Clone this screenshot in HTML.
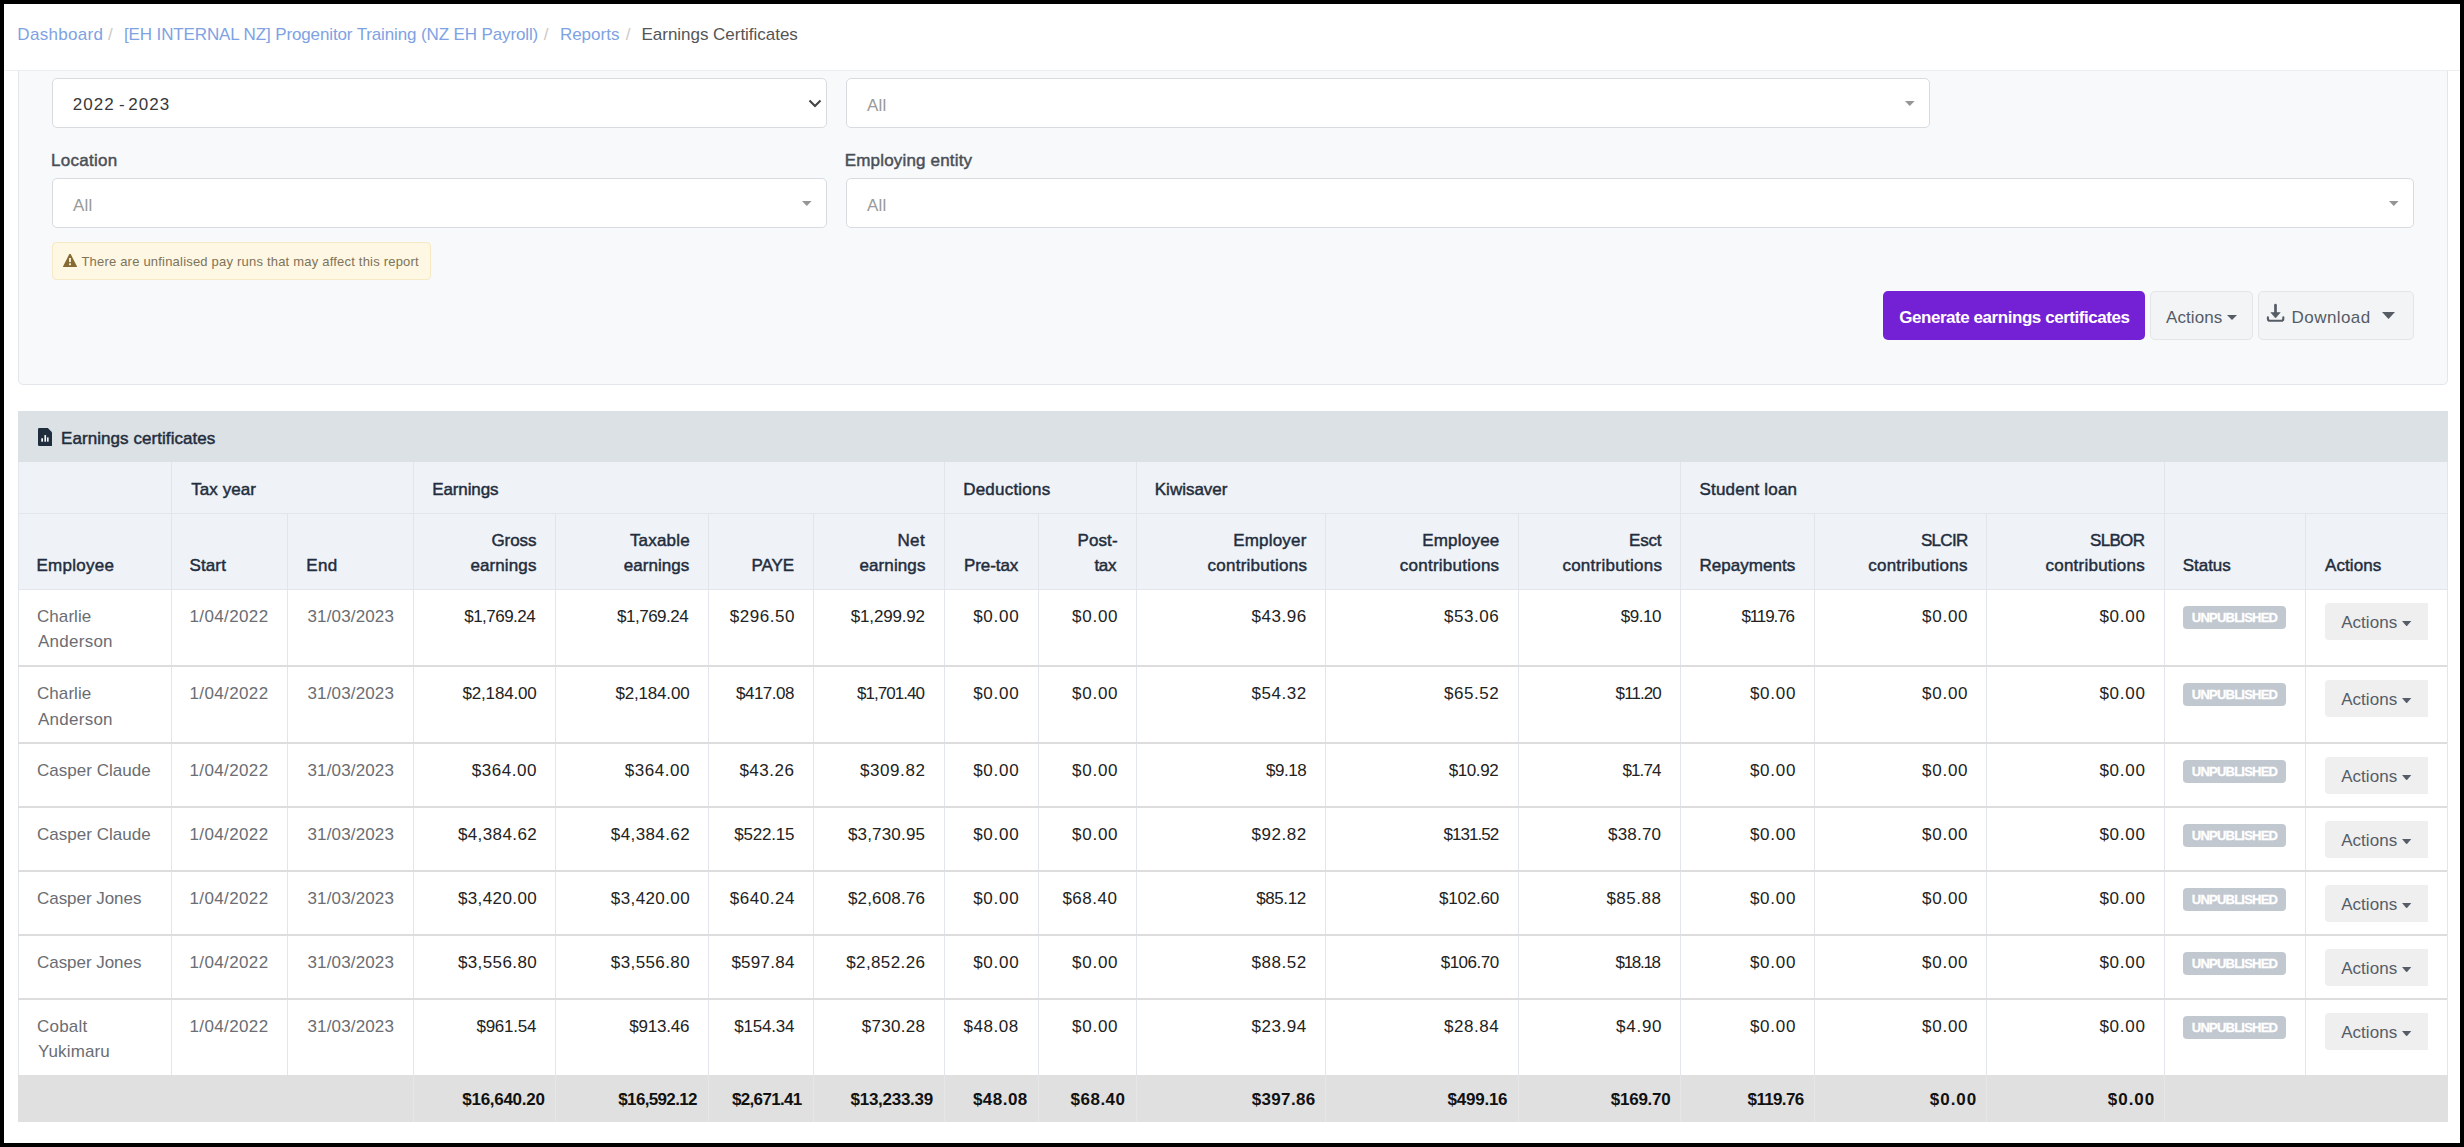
<!DOCTYPE html>
<html><head><meta charset="utf-8"><title>Earnings Certificates</title>
<style>
html,body{margin:0;padding:0;}
body{width:2464px;height:1147px;background:#000;position:relative;overflow:hidden;font-family:"Liberation Sans", sans-serif;}
.t{position:absolute;white-space:nowrap;line-height:40px;font-family:"Liberation Sans", sans-serif;}
.r{position:absolute;}
</style></head><body>
<div class="r" style="left:4px;top:4px;width:2456px;height:1139px;background:#ffffff;"></div>
<div class="t" style="left:17.30px;top:15.00px;font-size:17px;color:#7ea2e3;z-index:2;letter-spacing:0.325px;">Dashboard</div>
<div class="t" style="left:108.10px;top:15.00px;font-size:17px;color:#cdc9c5;z-index:2;">/</div>
<div class="t" style="left:124.00px;top:15.00px;font-size:17px;color:#7ea2e3;z-index:2;letter-spacing:-0.127px;">[EH INTERNAL NZ] Progenitor Training (NZ EH Payroll)</div>
<div class="t" style="left:543.80px;top:15.00px;font-size:17px;color:#cdc9c5;z-index:2;">/</div>
<div class="t" style="left:559.90px;top:15.00px;font-size:17px;color:#7ea2e3;z-index:2;">Reports</div>
<div class="t" style="left:625.80px;top:15.00px;font-size:17px;color:#cdc9c5;z-index:2;">/</div>
<div class="t" style="left:641.50px;top:15.00px;font-size:17px;color:#555555;z-index:2;letter-spacing:-0.025px;">Earnings Certificates</div>
<div class="r" style="left:18px;top:60px;width:2430px;height:325px;background:#f8f9fb;border:1px solid #e3e6ea;box-sizing:border-box;border-radius:5px;"></div>
<div class="r" style="left:4px;top:4px;width:2456px;height:66px;background:#ffffff;z-index:1;"></div>
<div class="r" style="left:5px;top:70px;width:2455px;height:1px;background:#eceef1;z-index:1;"></div>
<div class="r" style="left:52px;top:78px;width:775px;height:50px;background:#ffffff;border:1px solid #d8dce0;box-sizing:border-box;border-radius:5px;"></div>
<div class="r" style="left:846px;top:78px;width:1084px;height:50px;background:#ffffff;border:1px solid #d8dce0;box-sizing:border-box;border-radius:5px;"></div>
<div class="r" style="left:52px;top:178px;width:775px;height:50px;background:#ffffff;border:1px solid #d8dce0;box-sizing:border-box;border-radius:5px;"></div>
<div class="r" style="left:846px;top:178px;width:1568px;height:50px;background:#ffffff;border:1px solid #d8dce0;box-sizing:border-box;border-radius:5px;"></div>
<div class="t" style="left:72.80px;top:85.00px;font-size:17px;color:#383838;z-index:2;letter-spacing:1.067px;">2022</div>
<div class="t" style="left:119.10px;top:85.00px;font-size:17px;color:#383838;z-index:2;">-</div>
<div class="t" style="left:128.30px;top:85.00px;font-size:17px;color:#383838;z-index:2;letter-spacing:1.000px;">2023</div>
<div class="t" style="left:867.00px;top:86.00px;font-size:17px;color:#9a9a9a;z-index:2;letter-spacing:0.150px;">All</div>
<div class="t" style="left:73.00px;top:186.00px;font-size:17px;color:#9a9a9a;z-index:2;letter-spacing:0.150px;">All</div>
<div class="t" style="left:867.00px;top:186.00px;font-size:17px;color:#9a9a9a;z-index:2;letter-spacing:0.150px;">All</div>
<svg class="r" style="left:807px;top:98px" width="16" height="12" viewBox="0 0 16 12"><path d="M2.5 2.5 L8 8 L13.5 2.5" fill="none" stroke="#444" stroke-width="2.1"/></svg>
<svg class="r" style="left:1905.2px;top:100.8px;z-index:2" width="9.6" height="5" viewBox="0 0 9.6 5"><path d="M0 0 L9.6 0 L4.8 5 Z" fill="#959595"/></svg>
<svg class="r" style="left:802.3000000000001px;top:200.9px;z-index:2" width="9.6" height="5" viewBox="0 0 9.6 5"><path d="M0 0 L9.6 0 L4.8 5 Z" fill="#959595"/></svg>
<svg class="r" style="left:2389.2px;top:200.9px;z-index:2" width="9.6" height="5" viewBox="0 0 9.6 5"><path d="M0 0 L9.6 0 L4.8 5 Z" fill="#959595"/></svg>
<div class="t" style="left:51.00px;top:141.00px;font-size:17px;color:#4a4f57;z-index:2;-webkit-text-stroke:0.45px #4a4f57;letter-spacing:0.286px;">Location</div>
<div class="t" style="left:844.70px;top:141.00px;font-size:17px;color:#4a4f57;z-index:2;-webkit-text-stroke:0.45px #4a4f57;letter-spacing:0.180px;">Employing entity</div>
<div class="r" style="left:52px;top:242px;width:379px;height:38px;background:#fdf7e3;border:1px solid #f6e9c4;box-sizing:border-box;border-radius:4px;"></div>
<svg class="r" style="left:62px;top:253px;z-index:2" width="16" height="15" viewBox="0 0 16 15"><path d="M7.2 1.2 Q8 0.3 8.8 1.2 L15 13.4 Q15.2 14 14.5 14 L1.5 14 Q0.8 14 1 13.4 Z" fill="#866a33"/><rect x="7.1" y="5" width="1.8" height="4.1" fill="#fdf7e3"/><rect x="7.1" y="10.3" width="1.8" height="1.9" fill="#fdf7e3"/></svg>
<div class="t" style="left:81.40px;top:242.00px;font-size:13px;color:#7f7358;z-index:2;letter-spacing:0.204px;">There are unfinalised pay runs that may affect this report</div>
<div class="r" style="left:1883px;top:291px;width:262px;height:49px;background:#7421d6;border-radius:5px;"></div>
<div class="t" style="left:1899.20px;top:298.00px;font-size:17px;color:#ffffff;z-index:2;font-weight:700;letter-spacing:-0.448px;">Generate earnings certificates</div>
<div class="r" style="left:2150px;top:291px;width:103px;height:49px;background:#f3f4f6;border:1px solid #e3e5e8;box-sizing:border-box;border-radius:5px;"></div>
<div class="t" style="left:2166.00px;top:298.00px;font-size:17px;color:#555c66;z-index:2;letter-spacing:0.100px;">Actions</div>
<svg class="r" style="left:2227.0px;top:315px;z-index:2" width="10" height="5" viewBox="0 0 10 5"><path d="M0 0 L10 0 L5.0 5 Z" fill="#555c66"/></svg>
<div class="r" style="left:2258px;top:291px;width:156px;height:49px;background:#f3f4f6;border:1px solid #e3e5e8;box-sizing:border-box;border-radius:5px;"></div>
<svg class="r" style="left:2264px;top:302px;z-index:2" width="24" height="24" viewBox="0 0 24 24"><path d="M11.5 3.2 V11.5" stroke="#555c66" stroke-width="2.7" stroke-linecap="round" fill="none"/><path d="M6.9 10.6 L16.2 10.6 L11.55 16 Z" fill="#555c66" stroke="#555c66" stroke-width="0.6" stroke-linejoin="round"/><path d="M3.9 15.2 V16.7 Q3.9 18.8 6 18.8 H17.2 Q19.3 18.8 19.3 16.7 V15.2" stroke="#555c66" stroke-width="2.1" stroke-linecap="round" fill="none"/></svg>
<div class="t" style="left:2291.60px;top:298.00px;font-size:17px;color:#555c66;z-index:2;letter-spacing:0.429px;">Download</div>
<svg class="r" style="left:2381.5px;top:312px;z-index:2" width="13" height="7" viewBox="0 0 13 7"><path d="M0 0 L13 0 L6.5 7 Z" fill="#555c66"/></svg>
<div class="r" style="left:18px;top:411px;width:2430px;height:51px;background:#dbe1e4;"></div>
<svg class="r" style="left:37.8px;top:428px" width="14.4" height="18" viewBox="0 0 14.4 18"><path d="M1.2 0 H9.8 L14.4 4.6 V16.8 Q14.4 18 13.2 18 H1.2 Q0 18 0 16.8 V1.2 Q0 0 1.2 0 Z" fill="#1f2d3d"/><rect x="3.3" y="10.3" width="1.7" height="3.4" fill="#ffffff"/><rect x="6.4" y="7.1" width="1.7" height="6.6" fill="#ffffff"/><rect x="9.1" y="9.4" width="1.5" height="4.3" fill="#ffffff"/></svg>
<div class="t" style="left:61.00px;top:419.00px;font-size:17px;color:#1f2d3d;z-index:2;-webkit-text-stroke:0.45px #1f2d3d;letter-spacing:0.065px;">Earnings certificates</div>
<div class="r" style="left:18px;top:462px;width:2429px;height:127px;background:#eff2f7;"></div>
<div class="r" style="left:18px;top:513px;width:2429px;height:1px;background:#e2e6ec;"></div>
<div class="r" style="left:18px;top:589px;width:2429px;height:1px;background:#e2e6ec;"></div>
<div class="r" style="left:18px;top:590px;width:2429px;height:485px;background:#ffffff;"></div>
<div class="r" style="left:171px;top:462px;width:1px;height:51px;background:#e2e6ec;"></div>
<div class="r" style="left:413px;top:462px;width:1px;height:51px;background:#e2e6ec;"></div>
<div class="r" style="left:944px;top:462px;width:1px;height:51px;background:#e2e6ec;"></div>
<div class="r" style="left:1136px;top:462px;width:1px;height:51px;background:#e2e6ec;"></div>
<div class="r" style="left:1680px;top:462px;width:1px;height:51px;background:#e2e6ec;"></div>
<div class="r" style="left:2164px;top:462px;width:1px;height:51px;background:#e2e6ec;"></div>
<div class="r" style="left:171px;top:513px;width:1px;height:562px;background:#e2e6ec;"></div>
<div class="r" style="left:287px;top:513px;width:1px;height:562px;background:#e2e6ec;"></div>
<div class="r" style="left:413px;top:513px;width:1px;height:562px;background:#e2e6ec;"></div>
<div class="r" style="left:555px;top:513px;width:1px;height:562px;background:#e2e6ec;"></div>
<div class="r" style="left:708px;top:513px;width:1px;height:562px;background:#e2e6ec;"></div>
<div class="r" style="left:813px;top:513px;width:1px;height:562px;background:#e2e6ec;"></div>
<div class="r" style="left:944px;top:513px;width:1px;height:562px;background:#e2e6ec;"></div>
<div class="r" style="left:1038px;top:513px;width:1px;height:562px;background:#e2e6ec;"></div>
<div class="r" style="left:1136px;top:513px;width:1px;height:562px;background:#e2e6ec;"></div>
<div class="r" style="left:1325px;top:513px;width:1px;height:562px;background:#e2e6ec;"></div>
<div class="r" style="left:1518px;top:513px;width:1px;height:562px;background:#e2e6ec;"></div>
<div class="r" style="left:1680px;top:513px;width:1px;height:562px;background:#e2e6ec;"></div>
<div class="r" style="left:1814px;top:513px;width:1px;height:562px;background:#e2e6ec;"></div>
<div class="r" style="left:1986px;top:513px;width:1px;height:562px;background:#e2e6ec;"></div>
<div class="r" style="left:2164px;top:513px;width:1px;height:562px;background:#e2e6ec;"></div>
<div class="r" style="left:2305px;top:513px;width:1px;height:562px;background:#e2e6ec;"></div>
<div class="r" style="left:18px;top:462px;width:1px;height:613px;background:#e2e6ec;"></div>
<div class="r" style="left:2447px;top:462px;width:1px;height:613px;background:#e2e6ec;"></div>
<div class="t" style="left:191.20px;top:470.00px;font-size:17px;color:#1f2d3d;z-index:2;-webkit-text-stroke:0.45px #1f2d3d;letter-spacing:0.071px;">Tax year</div>
<div class="t" style="left:432.20px;top:470.00px;font-size:17px;color:#1f2d3d;z-index:2;-webkit-text-stroke:0.45px #1f2d3d;letter-spacing:-0.100px;">Earnings</div>
<div class="t" style="left:963.20px;top:470.00px;font-size:17px;color:#1f2d3d;z-index:2;-webkit-text-stroke:0.45px #1f2d3d;letter-spacing:0.211px;">Deductions</div>
<div class="t" style="left:1154.80px;top:470.00px;font-size:17px;color:#1f2d3d;z-index:2;-webkit-text-stroke:0.45px #1f2d3d;letter-spacing:-0.012px;">Kiwisaver</div>
<div class="t" style="left:1699.50px;top:470.00px;font-size:17px;color:#1f2d3d;z-index:2;-webkit-text-stroke:0.45px #1f2d3d;letter-spacing:0.191px;">Student loan</div>
<div class="t" style="left:36.50px;top:546.00px;font-size:17px;color:#1f2d3d;z-index:2;-webkit-text-stroke:0.45px #1f2d3d;letter-spacing:0.257px;">Employee</div>
<div class="t" style="left:189.40px;top:546.00px;font-size:17px;color:#1f2d3d;z-index:2;-webkit-text-stroke:0.45px #1f2d3d;letter-spacing:0.150px;">Start</div>
<div class="t" style="left:306.30px;top:546.00px;font-size:17px;color:#1f2d3d;z-index:2;-webkit-text-stroke:0.45px #1f2d3d;letter-spacing:0.350px;">End</div>
<div class="t" style="left:491.40px;top:521.00px;font-size:17px;color:#1f2d3d;z-index:2;-webkit-text-stroke:0.45px #1f2d3d;letter-spacing:-0.050px;">Gross</div>
<div class="t" style="left:470.40px;top:546.00px;font-size:17px;color:#1f2d3d;z-index:2;-webkit-text-stroke:0.45px #1f2d3d;letter-spacing:0.114px;">earnings</div>
<div class="t" style="left:629.90px;top:521.00px;font-size:17px;color:#1f2d3d;z-index:2;-webkit-text-stroke:0.45px #1f2d3d;letter-spacing:0.183px;">Taxable</div>
<div class="t" style="left:623.80px;top:546.00px;font-size:17px;color:#1f2d3d;z-index:2;-webkit-text-stroke:0.45px #1f2d3d;letter-spacing:0.029px;">earnings</div>
<div class="t" style="left:751.40px;top:546.00px;font-size:17px;color:#1f2d3d;z-index:2;-webkit-text-stroke:0.45px #1f2d3d;letter-spacing:-0.067px;">PAYE</div>
<div class="t" style="left:897.40px;top:521.00px;font-size:17px;color:#1f2d3d;z-index:2;-webkit-text-stroke:0.45px #1f2d3d;letter-spacing:0.400px;">Net</div>
<div class="t" style="left:859.50px;top:546.00px;font-size:17px;color:#1f2d3d;z-index:2;-webkit-text-stroke:0.45px #1f2d3d;letter-spacing:0.100px;">earnings</div>
<div class="t" style="left:963.90px;top:546.00px;font-size:17px;color:#1f2d3d;z-index:2;-webkit-text-stroke:0.45px #1f2d3d;letter-spacing:-0.067px;">Pre-tax</div>
<div class="t" style="left:1077.60px;top:521.00px;font-size:17px;color:#1f2d3d;z-index:2;-webkit-text-stroke:0.45px #1f2d3d;letter-spacing:0.075px;">Post-</div>
<div class="t" style="left:1094.40px;top:546.00px;font-size:17px;color:#1f2d3d;z-index:2;-webkit-text-stroke:0.45px #1f2d3d;letter-spacing:-0.250px;">tax</div>
<div class="t" style="left:1233.20px;top:521.00px;font-size:17px;color:#1f2d3d;z-index:2;-webkit-text-stroke:0.45px #1f2d3d;letter-spacing:0.186px;">Employer</div>
<div class="t" style="left:1207.60px;top:546.00px;font-size:17px;color:#1f2d3d;z-index:2;-webkit-text-stroke:0.45px #1f2d3d;letter-spacing:0.242px;">contributions</div>
<div class="t" style="left:1422.20px;top:521.00px;font-size:17px;color:#1f2d3d;z-index:2;-webkit-text-stroke:0.45px #1f2d3d;letter-spacing:0.214px;">Employee</div>
<div class="t" style="left:1399.80px;top:546.00px;font-size:17px;color:#1f2d3d;z-index:2;-webkit-text-stroke:0.45px #1f2d3d;letter-spacing:0.242px;">contributions</div>
<div class="t" style="left:1629.10px;top:521.00px;font-size:17px;color:#1f2d3d;z-index:2;-webkit-text-stroke:0.45px #1f2d3d;letter-spacing:-0.200px;">Esct</div>
<div class="t" style="left:1562.40px;top:546.00px;font-size:17px;color:#1f2d3d;z-index:2;-webkit-text-stroke:0.45px #1f2d3d;letter-spacing:0.258px;">contributions</div>
<div class="t" style="left:1699.50px;top:546.00px;font-size:17px;color:#1f2d3d;z-index:2;-webkit-text-stroke:0.45px #1f2d3d;letter-spacing:0.022px;">Repayments</div>
<div class="t" style="left:1921.00px;top:521.00px;font-size:17px;color:#1f2d3d;z-index:2;-webkit-text-stroke:0.45px #1f2d3d;letter-spacing:-0.725px;">SLCIR</div>
<div class="t" style="left:1868.20px;top:546.00px;font-size:17px;color:#1f2d3d;z-index:2;-webkit-text-stroke:0.45px #1f2d3d;letter-spacing:0.242px;">contributions</div>
<div class="t" style="left:2090.00px;top:521.00px;font-size:17px;color:#1f2d3d;z-index:2;-webkit-text-stroke:0.45px #1f2d3d;letter-spacing:-0.675px;">SLBOR</div>
<div class="t" style="left:2045.50px;top:546.00px;font-size:17px;color:#1f2d3d;z-index:2;-webkit-text-stroke:0.45px #1f2d3d;letter-spacing:0.233px;">contributions</div>
<div class="t" style="left:2182.70px;top:546.00px;font-size:17px;color:#1f2d3d;z-index:2;-webkit-text-stroke:0.45px #1f2d3d;letter-spacing:-0.020px;">Status</div>
<div class="t" style="left:2325.00px;top:546.00px;font-size:17px;color:#1f2d3d;z-index:2;-webkit-text-stroke:0.45px #1f2d3d;letter-spacing:0.100px;">Actions</div>
<div class="t" style="left:37.00px;top:597.00px;font-size:17px;color:#6a6d73;z-index:2;letter-spacing:0.067px;">Charlie</div>
<div class="t" style="left:38.00px;top:622.00px;font-size:17px;color:#6a6d73;z-index:2;letter-spacing:0.257px;">Anderson</div>
<div class="t" style="left:189.50px;top:597.00px;font-size:17px;color:#6a6d73;z-index:2;letter-spacing:0.375px;">1/04/2022</div>
<div class="t" style="left:307.50px;top:597.00px;font-size:17px;color:#6a6d73;z-index:2;letter-spacing:0.144px;">31/03/2023</div>
<div class="t" style="left:464.20px;top:597.00px;font-size:17px;color:#222222;z-index:2;letter-spacing:-0.512px;">$1,769.24</div>
<div class="t" style="left:617.10px;top:597.00px;font-size:17px;color:#222222;z-index:2;letter-spacing:-0.512px;">$1,769.24</div>
<div class="t" style="left:729.70px;top:597.00px;font-size:17px;color:#222222;z-index:2;letter-spacing:0.550px;">$296.50</div>
<div class="t" style="left:850.80px;top:597.00px;font-size:17px;color:#222222;z-index:2;letter-spacing:-0.175px;">$1,299.92</div>
<div class="t" style="left:973.20px;top:597.00px;font-size:17px;color:#222222;z-index:2;letter-spacing:0.725px;">$0.00</div>
<div class="t" style="left:1072.10px;top:597.00px;font-size:17px;color:#222222;z-index:2;letter-spacing:0.725px;">$0.00</div>
<div class="t" style="left:1251.60px;top:597.00px;font-size:17px;color:#222222;z-index:2;letter-spacing:0.520px;">$43.96</div>
<div class="t" style="left:1444.10px;top:597.00px;font-size:17px;color:#222222;z-index:2;letter-spacing:0.520px;">$53.06</div>
<div class="t" style="left:1620.70px;top:597.00px;font-size:17px;color:#222222;z-index:2;letter-spacing:-0.425px;">$9.10</div>
<div class="t" style="left:1741.40px;top:597.00px;font-size:17px;color:#222222;z-index:2;letter-spacing:-1.100px;">$119.76</div>
<div class="t" style="left:1922.10px;top:597.00px;font-size:17px;color:#222222;z-index:2;letter-spacing:0.725px;">$0.00</div>
<div class="t" style="left:2099.40px;top:597.00px;font-size:17px;color:#222222;z-index:2;letter-spacing:0.725px;">$0.00</div>
<div class="r" style="left:2183px;top:606px;width:103px;height:23px;background:#c1c8d0;border-radius:4px;"></div>
<div class="t" style="left:2191.80px;top:598.00px;font-size:13px;color:#ffffff;z-index:2;-webkit-text-stroke:0.3px #ffffff;font-weight:700;letter-spacing:-0.770px;">UNPUBLISHED</div>
<div class="r" style="left:2325px;top:603px;width:103px;height:37px;background:#efefef;border-radius:4px 0 0 4px;"></div>
<div class="t" style="left:2341.20px;top:603.00px;font-size:17px;color:#555d68;z-index:2;letter-spacing:0.033px;">Actions</div>
<svg class="r" style="left:2402.35px;top:621px;z-index:2" width="9.3" height="5.4" viewBox="0 0 9.3 5.4"><path d="M0 0 L9.3 0 L4.65 5.4 Z" fill="#555d68"/></svg>
<div class="r" style="left:18px;top:665px;width:2429px;height:2px;background:#dddddd;"></div>
<div class="t" style="left:37.00px;top:674.00px;font-size:17px;color:#6a6d73;z-index:2;letter-spacing:0.067px;">Charlie</div>
<div class="t" style="left:38.00px;top:700.00px;font-size:17px;color:#6a6d73;z-index:2;letter-spacing:0.257px;">Anderson</div>
<div class="t" style="left:189.50px;top:674.00px;font-size:17px;color:#6a6d73;z-index:2;letter-spacing:0.375px;">1/04/2022</div>
<div class="t" style="left:307.50px;top:674.00px;font-size:17px;color:#6a6d73;z-index:2;letter-spacing:0.144px;">31/03/2023</div>
<div class="t" style="left:462.50px;top:674.00px;font-size:17px;color:#222222;z-index:2;letter-spacing:-0.175px;">$2,184.00</div>
<div class="t" style="left:615.40px;top:674.00px;font-size:17px;color:#222222;z-index:2;letter-spacing:-0.175px;">$2,184.00</div>
<div class="t" style="left:736.00px;top:674.00px;font-size:17px;color:#222222;z-index:2;letter-spacing:-0.500px;">$417.08</div>
<div class="t" style="left:857.10px;top:674.00px;font-size:17px;color:#222222;z-index:2;letter-spacing:-0.963px;">$1,701.40</div>
<div class="t" style="left:973.20px;top:674.00px;font-size:17px;color:#222222;z-index:2;letter-spacing:0.725px;">$0.00</div>
<div class="t" style="left:1072.10px;top:674.00px;font-size:17px;color:#222222;z-index:2;letter-spacing:0.725px;">$0.00</div>
<div class="t" style="left:1251.60px;top:674.00px;font-size:17px;color:#222222;z-index:2;letter-spacing:0.520px;">$54.32</div>
<div class="t" style="left:1444.10px;top:674.00px;font-size:17px;color:#222222;z-index:2;letter-spacing:0.520px;">$65.52</div>
<div class="t" style="left:1615.60px;top:674.00px;font-size:17px;color:#222222;z-index:2;letter-spacing:-0.920px;">$11.20</div>
<div class="t" style="left:1749.90px;top:674.00px;font-size:17px;color:#222222;z-index:2;letter-spacing:0.725px;">$0.00</div>
<div class="t" style="left:1922.10px;top:674.00px;font-size:17px;color:#222222;z-index:2;letter-spacing:0.725px;">$0.00</div>
<div class="t" style="left:2099.40px;top:674.00px;font-size:17px;color:#222222;z-index:2;letter-spacing:0.725px;">$0.00</div>
<div class="r" style="left:2183px;top:683px;width:103px;height:23px;background:#c1c8d0;border-radius:4px;"></div>
<div class="t" style="left:2191.80px;top:675.00px;font-size:13px;color:#ffffff;z-index:2;-webkit-text-stroke:0.3px #ffffff;font-weight:700;letter-spacing:-0.770px;">UNPUBLISHED</div>
<div class="r" style="left:2325px;top:680px;width:103px;height:37px;background:#efefef;border-radius:4px 0 0 4px;"></div>
<div class="t" style="left:2341.20px;top:680.00px;font-size:17px;color:#555d68;z-index:2;letter-spacing:0.033px;">Actions</div>
<svg class="r" style="left:2402.35px;top:698px;z-index:2" width="9.3" height="5.4" viewBox="0 0 9.3 5.4"><path d="M0 0 L9.3 0 L4.65 5.4 Z" fill="#555d68"/></svg>
<div class="r" style="left:18px;top:742px;width:2429px;height:2px;background:#dddddd;"></div>
<div class="t" style="left:37.00px;top:751.00px;font-size:17px;color:#6a6d73;z-index:2;letter-spacing:0.017px;">Casper Claude</div>
<div class="t" style="left:189.50px;top:751.00px;font-size:17px;color:#6a6d73;z-index:2;letter-spacing:0.375px;">1/04/2022</div>
<div class="t" style="left:307.50px;top:751.00px;font-size:17px;color:#6a6d73;z-index:2;letter-spacing:0.144px;">31/03/2023</div>
<div class="t" style="left:471.80px;top:751.00px;font-size:17px;color:#222222;z-index:2;letter-spacing:0.550px;">$364.00</div>
<div class="t" style="left:624.70px;top:751.00px;font-size:17px;color:#222222;z-index:2;letter-spacing:0.550px;">$364.00</div>
<div class="t" style="left:739.40px;top:751.00px;font-size:17px;color:#222222;z-index:2;letter-spacing:0.520px;">$43.26</div>
<div class="t" style="left:860.10px;top:751.00px;font-size:17px;color:#222222;z-index:2;letter-spacing:0.550px;">$309.82</div>
<div class="t" style="left:973.20px;top:751.00px;font-size:17px;color:#222222;z-index:2;letter-spacing:0.725px;">$0.00</div>
<div class="t" style="left:1072.10px;top:751.00px;font-size:17px;color:#222222;z-index:2;letter-spacing:0.725px;">$0.00</div>
<div class="t" style="left:1265.90px;top:751.00px;font-size:17px;color:#222222;z-index:2;letter-spacing:-0.425px;">$9.18</div>
<div class="t" style="left:1448.70px;top:751.00px;font-size:17px;color:#222222;z-index:2;letter-spacing:-0.400px;">$10.92</div>
<div class="t" style="left:1622.40px;top:751.00px;font-size:17px;color:#222222;z-index:2;letter-spacing:-0.850px;">$1.74</div>
<div class="t" style="left:1749.90px;top:751.00px;font-size:17px;color:#222222;z-index:2;letter-spacing:0.725px;">$0.00</div>
<div class="t" style="left:1922.10px;top:751.00px;font-size:17px;color:#222222;z-index:2;letter-spacing:0.725px;">$0.00</div>
<div class="t" style="left:2099.40px;top:751.00px;font-size:17px;color:#222222;z-index:2;letter-spacing:0.725px;">$0.00</div>
<div class="r" style="left:2183px;top:760px;width:103px;height:23px;background:#c1c8d0;border-radius:4px;"></div>
<div class="t" style="left:2191.80px;top:752.00px;font-size:13px;color:#ffffff;z-index:2;-webkit-text-stroke:0.3px #ffffff;font-weight:700;letter-spacing:-0.770px;">UNPUBLISHED</div>
<div class="r" style="left:2325px;top:757px;width:103px;height:37px;background:#efefef;border-radius:4px 0 0 4px;"></div>
<div class="t" style="left:2341.20px;top:757.00px;font-size:17px;color:#555d68;z-index:2;letter-spacing:0.033px;">Actions</div>
<svg class="r" style="left:2402.35px;top:775px;z-index:2" width="9.3" height="5.4" viewBox="0 0 9.3 5.4"><path d="M0 0 L9.3 0 L4.65 5.4 Z" fill="#555d68"/></svg>
<div class="r" style="left:18px;top:806px;width:2429px;height:2px;background:#dddddd;"></div>
<div class="t" style="left:37.00px;top:815.00px;font-size:17px;color:#6a6d73;z-index:2;letter-spacing:0.017px;">Casper Claude</div>
<div class="t" style="left:189.50px;top:815.00px;font-size:17px;color:#6a6d73;z-index:2;letter-spacing:0.375px;">1/04/2022</div>
<div class="t" style="left:307.50px;top:815.00px;font-size:17px;color:#6a6d73;z-index:2;letter-spacing:0.144px;">31/03/2023</div>
<div class="t" style="left:457.90px;top:815.00px;font-size:17px;color:#222222;z-index:2;letter-spacing:0.400px;">$4,384.62</div>
<div class="t" style="left:610.80px;top:815.00px;font-size:17px;color:#222222;z-index:2;letter-spacing:0.400px;">$4,384.62</div>
<div class="t" style="left:734.30px;top:815.00px;font-size:17px;color:#222222;z-index:2;letter-spacing:-0.217px;">$522.15</div>
<div class="t" style="left:847.90px;top:815.00px;font-size:17px;color:#222222;z-index:2;letter-spacing:0.188px;">$3,730.95</div>
<div class="t" style="left:973.20px;top:815.00px;font-size:17px;color:#222222;z-index:2;letter-spacing:0.725px;">$0.00</div>
<div class="t" style="left:1072.10px;top:815.00px;font-size:17px;color:#222222;z-index:2;letter-spacing:0.725px;">$0.00</div>
<div class="t" style="left:1251.60px;top:815.00px;font-size:17px;color:#222222;z-index:2;letter-spacing:0.520px;">$92.82</div>
<div class="t" style="left:1443.60px;top:815.00px;font-size:17px;color:#222222;z-index:2;letter-spacing:-0.983px;">$131.52</div>
<div class="t" style="left:1608.10px;top:815.00px;font-size:17px;color:#222222;z-index:2;letter-spacing:0.180px;">$38.70</div>
<div class="t" style="left:1749.90px;top:815.00px;font-size:17px;color:#222222;z-index:2;letter-spacing:0.725px;">$0.00</div>
<div class="t" style="left:1922.10px;top:815.00px;font-size:17px;color:#222222;z-index:2;letter-spacing:0.725px;">$0.00</div>
<div class="t" style="left:2099.40px;top:815.00px;font-size:17px;color:#222222;z-index:2;letter-spacing:0.725px;">$0.00</div>
<div class="r" style="left:2183px;top:824px;width:103px;height:23px;background:#c1c8d0;border-radius:4px;"></div>
<div class="t" style="left:2191.80px;top:816.00px;font-size:13px;color:#ffffff;z-index:2;-webkit-text-stroke:0.3px #ffffff;font-weight:700;letter-spacing:-0.770px;">UNPUBLISHED</div>
<div class="r" style="left:2325px;top:821px;width:103px;height:37px;background:#efefef;border-radius:4px 0 0 4px;"></div>
<div class="t" style="left:2341.20px;top:821.00px;font-size:17px;color:#555d68;z-index:2;letter-spacing:0.033px;">Actions</div>
<svg class="r" style="left:2402.35px;top:839px;z-index:2" width="9.3" height="5.4" viewBox="0 0 9.3 5.4"><path d="M0 0 L9.3 0 L4.65 5.4 Z" fill="#555d68"/></svg>
<div class="r" style="left:18px;top:870px;width:2429px;height:2px;background:#dddddd;"></div>
<div class="t" style="left:37.00px;top:879.00px;font-size:17px;color:#6a6d73;z-index:2;letter-spacing:-0.045px;">Casper Jones</div>
<div class="t" style="left:189.50px;top:879.00px;font-size:17px;color:#6a6d73;z-index:2;letter-spacing:0.375px;">1/04/2022</div>
<div class="t" style="left:307.50px;top:879.00px;font-size:17px;color:#6a6d73;z-index:2;letter-spacing:0.144px;">31/03/2023</div>
<div class="t" style="left:457.90px;top:879.00px;font-size:17px;color:#222222;z-index:2;letter-spacing:0.400px;">$3,420.00</div>
<div class="t" style="left:610.80px;top:879.00px;font-size:17px;color:#222222;z-index:2;letter-spacing:0.400px;">$3,420.00</div>
<div class="t" style="left:729.70px;top:879.00px;font-size:17px;color:#222222;z-index:2;letter-spacing:0.550px;">$640.24</div>
<div class="t" style="left:847.90px;top:879.00px;font-size:17px;color:#222222;z-index:2;letter-spacing:0.188px;">$2,608.76</div>
<div class="t" style="left:973.20px;top:879.00px;font-size:17px;color:#222222;z-index:2;letter-spacing:0.725px;">$0.00</div>
<div class="t" style="left:1062.40px;top:879.00px;font-size:17px;color:#222222;z-index:2;letter-spacing:0.520px;">$68.40</div>
<div class="t" style="left:1256.20px;top:879.00px;font-size:17px;color:#222222;z-index:2;letter-spacing:-0.400px;">$85.12</div>
<div class="t" style="left:1439.00px;top:879.00px;font-size:17px;color:#222222;z-index:2;letter-spacing:-0.217px;">$102.60</div>
<div class="t" style="left:1606.40px;top:879.00px;font-size:17px;color:#222222;z-index:2;letter-spacing:0.520px;">$85.88</div>
<div class="t" style="left:1749.90px;top:879.00px;font-size:17px;color:#222222;z-index:2;letter-spacing:0.725px;">$0.00</div>
<div class="t" style="left:1922.10px;top:879.00px;font-size:17px;color:#222222;z-index:2;letter-spacing:0.725px;">$0.00</div>
<div class="t" style="left:2099.40px;top:879.00px;font-size:17px;color:#222222;z-index:2;letter-spacing:0.725px;">$0.00</div>
<div class="r" style="left:2183px;top:888px;width:103px;height:23px;background:#c1c8d0;border-radius:4px;"></div>
<div class="t" style="left:2191.80px;top:880.00px;font-size:13px;color:#ffffff;z-index:2;-webkit-text-stroke:0.3px #ffffff;font-weight:700;letter-spacing:-0.770px;">UNPUBLISHED</div>
<div class="r" style="left:2325px;top:885px;width:103px;height:37px;background:#efefef;border-radius:4px 0 0 4px;"></div>
<div class="t" style="left:2341.20px;top:885.00px;font-size:17px;color:#555d68;z-index:2;letter-spacing:0.033px;">Actions</div>
<svg class="r" style="left:2402.35px;top:903px;z-index:2" width="9.3" height="5.4" viewBox="0 0 9.3 5.4"><path d="M0 0 L9.3 0 L4.65 5.4 Z" fill="#555d68"/></svg>
<div class="r" style="left:18px;top:934px;width:2429px;height:2px;background:#dddddd;"></div>
<div class="t" style="left:37.00px;top:943.00px;font-size:17px;color:#6a6d73;z-index:2;letter-spacing:-0.045px;">Casper Jones</div>
<div class="t" style="left:189.50px;top:943.00px;font-size:17px;color:#6a6d73;z-index:2;letter-spacing:0.375px;">1/04/2022</div>
<div class="t" style="left:307.50px;top:943.00px;font-size:17px;color:#6a6d73;z-index:2;letter-spacing:0.144px;">31/03/2023</div>
<div class="t" style="left:457.90px;top:943.00px;font-size:17px;color:#222222;z-index:2;letter-spacing:0.400px;">$3,556.80</div>
<div class="t" style="left:610.80px;top:943.00px;font-size:17px;color:#222222;z-index:2;letter-spacing:0.400px;">$3,556.80</div>
<div class="t" style="left:731.40px;top:943.00px;font-size:17px;color:#222222;z-index:2;letter-spacing:0.267px;">$597.84</div>
<div class="t" style="left:846.20px;top:943.00px;font-size:17px;color:#222222;z-index:2;letter-spacing:0.400px;">$2,852.26</div>
<div class="t" style="left:973.20px;top:943.00px;font-size:17px;color:#222222;z-index:2;letter-spacing:0.725px;">$0.00</div>
<div class="t" style="left:1072.10px;top:943.00px;font-size:17px;color:#222222;z-index:2;letter-spacing:0.725px;">$0.00</div>
<div class="t" style="left:1251.60px;top:943.00px;font-size:17px;color:#222222;z-index:2;letter-spacing:0.520px;">$88.52</div>
<div class="t" style="left:1440.70px;top:943.00px;font-size:17px;color:#222222;z-index:2;letter-spacing:-0.500px;">$106.70</div>
<div class="t" style="left:1615.60px;top:943.00px;font-size:17px;color:#222222;z-index:2;letter-spacing:-1.320px;">$18.18</div>
<div class="t" style="left:1749.90px;top:943.00px;font-size:17px;color:#222222;z-index:2;letter-spacing:0.725px;">$0.00</div>
<div class="t" style="left:1922.10px;top:943.00px;font-size:17px;color:#222222;z-index:2;letter-spacing:0.725px;">$0.00</div>
<div class="t" style="left:2099.40px;top:943.00px;font-size:17px;color:#222222;z-index:2;letter-spacing:0.725px;">$0.00</div>
<div class="r" style="left:2183px;top:952px;width:103px;height:23px;background:#c1c8d0;border-radius:4px;"></div>
<div class="t" style="left:2191.80px;top:944.00px;font-size:13px;color:#ffffff;z-index:2;-webkit-text-stroke:0.3px #ffffff;font-weight:700;letter-spacing:-0.770px;">UNPUBLISHED</div>
<div class="r" style="left:2325px;top:949px;width:103px;height:37px;background:#efefef;border-radius:4px 0 0 4px;"></div>
<div class="t" style="left:2341.20px;top:949.00px;font-size:17px;color:#555d68;z-index:2;letter-spacing:0.033px;">Actions</div>
<svg class="r" style="left:2402.35px;top:967px;z-index:2" width="9.3" height="5.4" viewBox="0 0 9.3 5.4"><path d="M0 0 L9.3 0 L4.65 5.4 Z" fill="#555d68"/></svg>
<div class="r" style="left:18px;top:998px;width:2429px;height:2px;background:#dddddd;"></div>
<div class="t" style="left:37.00px;top:1007.00px;font-size:17px;color:#6a6d73;z-index:2;letter-spacing:0.200px;">Cobalt</div>
<div class="t" style="left:38.00px;top:1032.00px;font-size:17px;color:#6a6d73;z-index:2;letter-spacing:0.129px;">Yukimaru</div>
<div class="t" style="left:189.50px;top:1007.00px;font-size:17px;color:#6a6d73;z-index:2;letter-spacing:0.375px;">1/04/2022</div>
<div class="t" style="left:307.50px;top:1007.00px;font-size:17px;color:#6a6d73;z-index:2;letter-spacing:0.144px;">31/03/2023</div>
<div class="t" style="left:476.40px;top:1007.00px;font-size:17px;color:#222222;z-index:2;letter-spacing:-0.217px;">$961.54</div>
<div class="t" style="left:629.30px;top:1007.00px;font-size:17px;color:#222222;z-index:2;letter-spacing:-0.217px;">$913.46</div>
<div class="t" style="left:734.30px;top:1007.00px;font-size:17px;color:#222222;z-index:2;letter-spacing:-0.217px;">$154.34</div>
<div class="t" style="left:861.80px;top:1007.00px;font-size:17px;color:#222222;z-index:2;letter-spacing:0.267px;">$730.28</div>
<div class="t" style="left:963.50px;top:1007.00px;font-size:17px;color:#222222;z-index:2;letter-spacing:0.520px;">$48.08</div>
<div class="t" style="left:1072.10px;top:1007.00px;font-size:17px;color:#222222;z-index:2;letter-spacing:0.725px;">$0.00</div>
<div class="t" style="left:1251.60px;top:1007.00px;font-size:17px;color:#222222;z-index:2;letter-spacing:0.520px;">$23.94</div>
<div class="t" style="left:1444.10px;top:1007.00px;font-size:17px;color:#222222;z-index:2;letter-spacing:0.520px;">$28.84</div>
<div class="t" style="left:1616.10px;top:1007.00px;font-size:17px;color:#222222;z-index:2;letter-spacing:0.725px;">$4.90</div>
<div class="t" style="left:1749.90px;top:1007.00px;font-size:17px;color:#222222;z-index:2;letter-spacing:0.725px;">$0.00</div>
<div class="t" style="left:1922.10px;top:1007.00px;font-size:17px;color:#222222;z-index:2;letter-spacing:0.725px;">$0.00</div>
<div class="t" style="left:2099.40px;top:1007.00px;font-size:17px;color:#222222;z-index:2;letter-spacing:0.725px;">$0.00</div>
<div class="r" style="left:2183px;top:1016px;width:103px;height:23px;background:#c1c8d0;border-radius:4px;"></div>
<div class="t" style="left:2191.80px;top:1008.00px;font-size:13px;color:#ffffff;z-index:2;-webkit-text-stroke:0.3px #ffffff;font-weight:700;letter-spacing:-0.770px;">UNPUBLISHED</div>
<div class="r" style="left:2325px;top:1013px;width:103px;height:37px;background:#efefef;border-radius:4px 0 0 4px;"></div>
<div class="t" style="left:2341.20px;top:1013.00px;font-size:17px;color:#555d68;z-index:2;letter-spacing:0.033px;">Actions</div>
<svg class="r" style="left:2402.35px;top:1031px;z-index:2" width="9.3" height="5.4" viewBox="0 0 9.3 5.4"><path d="M0 0 L9.3 0 L4.65 5.4 Z" fill="#555d68"/></svg>
<div class="r" style="left:18px;top:1075px;width:2430px;height:47px;background:#e0e0e0;"></div>
<div class="r" style="left:413px;top:1075px;width:1px;height:47px;background:#e6e6e6;"></div>
<div class="r" style="left:555px;top:1075px;width:1px;height:47px;background:#e6e6e6;"></div>
<div class="r" style="left:708px;top:1075px;width:1px;height:47px;background:#e6e6e6;"></div>
<div class="r" style="left:813px;top:1075px;width:1px;height:47px;background:#e6e6e6;"></div>
<div class="r" style="left:944px;top:1075px;width:1px;height:47px;background:#e6e6e6;"></div>
<div class="r" style="left:1038px;top:1075px;width:1px;height:47px;background:#e6e6e6;"></div>
<div class="r" style="left:1136px;top:1075px;width:1px;height:47px;background:#e6e6e6;"></div>
<div class="r" style="left:1325px;top:1075px;width:1px;height:47px;background:#e6e6e6;"></div>
<div class="r" style="left:1518px;top:1075px;width:1px;height:47px;background:#e6e6e6;"></div>
<div class="r" style="left:1680px;top:1075px;width:1px;height:47px;background:#e6e6e6;"></div>
<div class="r" style="left:1814px;top:1075px;width:1px;height:47px;background:#e6e6e6;"></div>
<div class="r" style="left:1986px;top:1075px;width:1px;height:47px;background:#e6e6e6;"></div>
<div class="r" style="left:2164px;top:1075px;width:1px;height:47px;background:#e6e6e6;"></div>
<div class="t" style="left:462.30px;top:1080.00px;font-size:17px;color:#111111;z-index:2;font-weight:700;letter-spacing:-0.278px;">$16,640.20</div>
<div class="t" style="left:618.30px;top:1080.00px;font-size:17px;color:#111111;z-index:2;font-weight:700;letter-spacing:-0.656px;">$16,592.12</div>
<div class="t" style="left:732.00px;top:1080.00px;font-size:17px;color:#111111;z-index:2;font-weight:700;letter-spacing:-0.675px;">$2,671.41</div>
<div class="t" style="left:850.60px;top:1080.00px;font-size:17px;color:#111111;z-index:2;font-weight:700;letter-spacing:-0.278px;">$13,233.39</div>
<div class="t" style="left:972.90px;top:1080.00px;font-size:17px;color:#111111;z-index:2;font-weight:700;letter-spacing:0.480px;">$48.08</div>
<div class="t" style="left:1070.60px;top:1080.00px;font-size:17px;color:#111111;z-index:2;font-weight:700;letter-spacing:0.480px;">$68.40</div>
<div class="t" style="left:1251.80px;top:1080.00px;font-size:17px;color:#111111;z-index:2;font-weight:700;letter-spacing:0.317px;">$397.86</div>
<div class="t" style="left:1447.60px;top:1080.00px;font-size:17px;color:#111111;z-index:2;font-weight:700;letter-spacing:-0.250px;">$499.16</div>
<div class="t" style="left:1610.80px;top:1080.00px;font-size:17px;color:#111111;z-index:2;font-weight:700;letter-spacing:-0.250px;">$169.70</div>
<div class="t" style="left:1747.60px;top:1080.00px;font-size:17px;color:#111111;z-index:2;font-weight:700;letter-spacing:-0.650px;">$119.76</div>
<div class="t" style="left:1929.80px;top:1080.00px;font-size:17px;color:#111111;z-index:2;font-weight:700;letter-spacing:0.975px;">$0.00</div>
<div class="t" style="left:2107.80px;top:1080.00px;font-size:17px;color:#111111;z-index:2;font-weight:700;letter-spacing:0.975px;">$0.00</div>
</body></html>
